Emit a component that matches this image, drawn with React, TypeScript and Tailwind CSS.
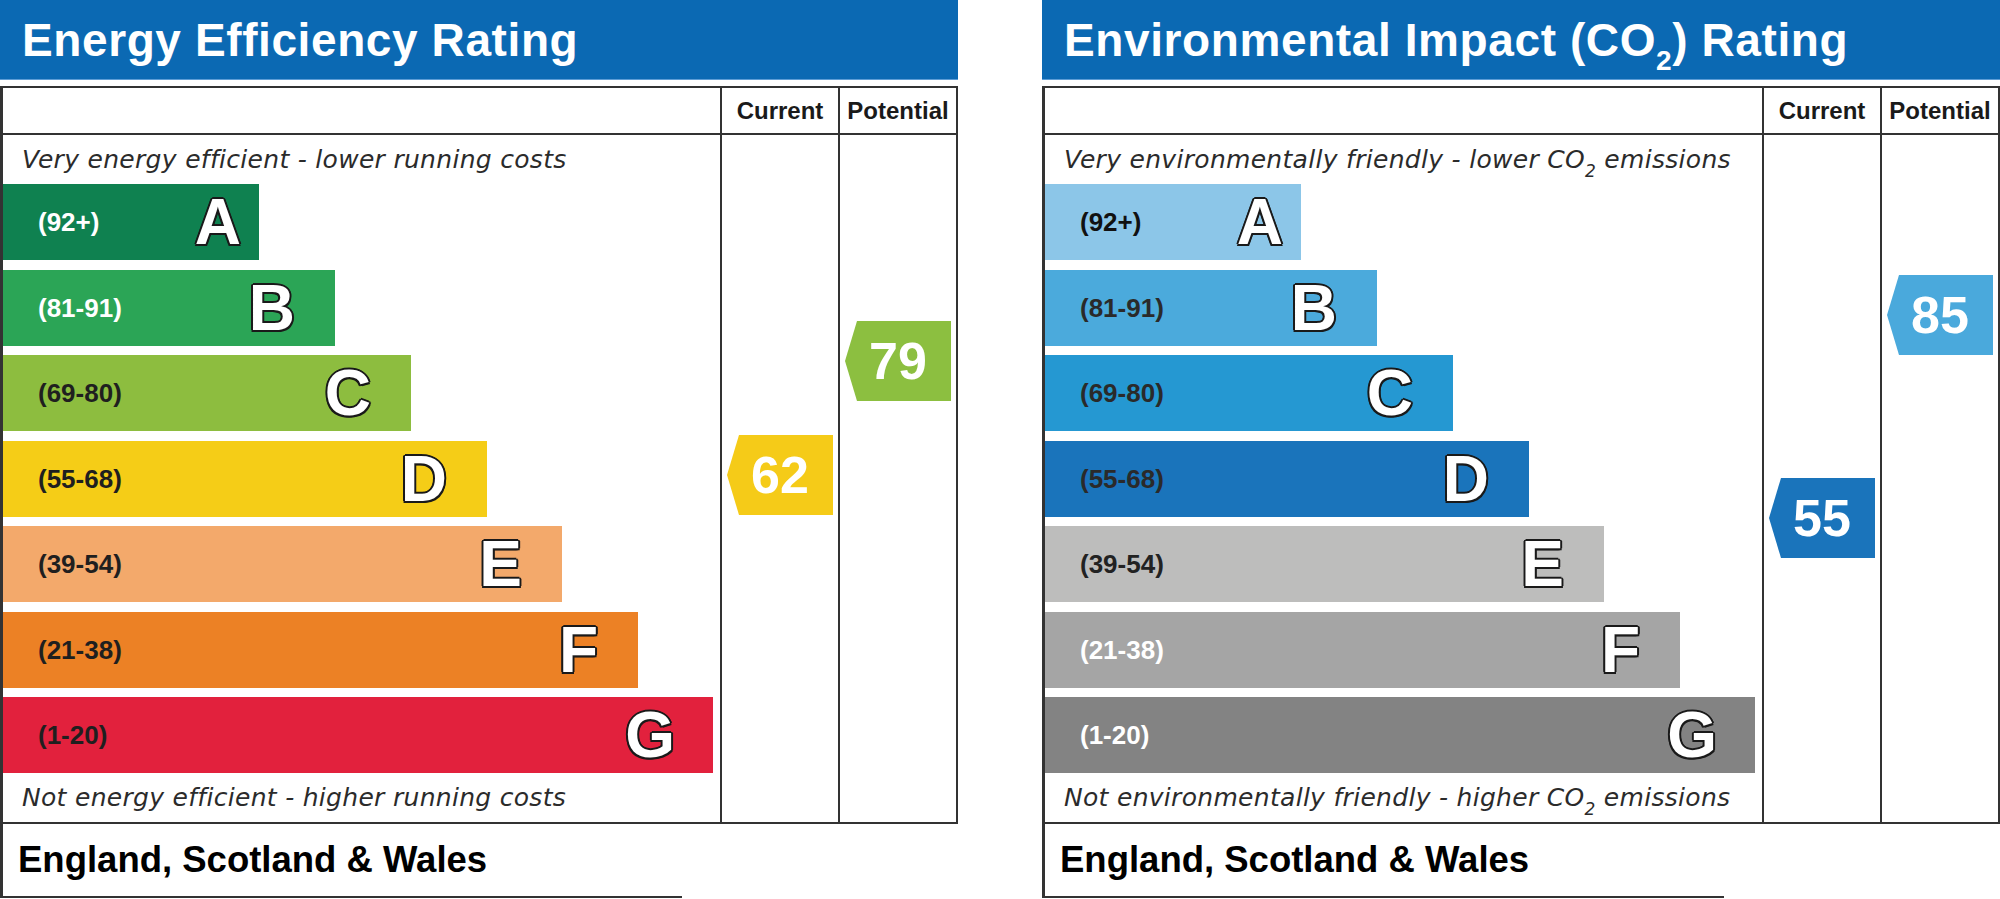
import React from "react";

type Band = {
  range: string;
  letter: string;
  width: string;
  bg: string;
  label: string;
  pr: string;
};

const energyBands: Band[] = [
  { range: "(92+)", letter: "A", width: "w-[256px]", bg: "bg-[#0f8150]", label: "text-white", pr: "pr-[18px]" },
  { range: "(81-91)", letter: "B", width: "w-[332px]", bg: "bg-[#2ba556]", label: "text-white", pr: "pr-[40px]" },
  { range: "(69-80)", letter: "C", width: "w-[408px]", bg: "bg-[#8dbd3f]", label: "text-[#1f1f1f]", pr: "pr-[40px]" },
  { range: "(55-68)", letter: "D", width: "w-[484px]", bg: "bg-[#f5cd17]", label: "text-[#1f1f1f]", pr: "pr-[40px]" },
  { range: "(39-54)", letter: "E", width: "w-[559px]", bg: "bg-[#f3a96b]", label: "text-[#1f1f1f]", pr: "pr-[40px]" },
  { range: "(21-38)", letter: "F", width: "w-[635px]", bg: "bg-[#ec8125]", label: "text-[#1f1f1f]", pr: "pr-[40px]" },
  { range: "(1-20)", letter: "G", width: "w-[710px]", bg: "bg-[#e2213d]", label: "text-[#1f1f1f]", pr: "pr-[38px]" },
];

const co2Bands: Band[] = [
  { range: "(92+)", letter: "A", width: "w-[256px]", bg: "bg-[#8cc6e8]", label: "text-[#111111]", pr: "pr-[18px]" },
  { range: "(81-91)", letter: "B", width: "w-[332px]", bg: "bg-[#4baadc]", label: "text-[#2a2a2a]", pr: "pr-[40px]" },
  { range: "(69-80)", letter: "C", width: "w-[408px]", bg: "bg-[#2598d2]", label: "text-[#2a2a2a]", pr: "pr-[40px]" },
  { range: "(55-68)", letter: "D", width: "w-[484px]", bg: "bg-[#1a74bb]", label: "text-[#2a2a2a]", pr: "pr-[40px]" },
  { range: "(39-54)", letter: "E", width: "w-[559px]", bg: "bg-[#bdbdbc]", label: "text-[#222222]", pr: "pr-[40px]" },
  { range: "(21-38)", letter: "F", width: "w-[635px]", bg: "bg-[#a5a5a5]", label: "text-white", pr: "pr-[40px]" },
  { range: "(1-20)", letter: "G", width: "w-[710px]", bg: "bg-[#838383]", label: "text-white", pr: "pr-[38px]" },
];

const outline =
  "[text-shadow:-1.5px_-1.5px_0_#1a1a1a,1.5px_-1.5px_0_#1a1a1a,-1.5px_1.5px_0_#1a1a1a,1.5px_1.5px_0_#1a1a1a,0_2px_0_#1a1a1a,0_-2px_0_#1a1a1a,2px_0_0_#1a1a1a,-2px_0_0_#1a1a1a]";

function Arrow({ value, bg, mt }: { value: string; bg: string; mt: string }) {
  return (
    <div
      className={`${mt} ml-[5px] w-[106px] h-[80px] ${bg} flex items-center justify-center [clip-path:polygon(12px_0,100%_0,100%_100%,12px_100%,0_50%)]`}
    >
      <span className="text-white font-bold text-[52px] leading-none font-['Liberation_Sans',Arial,sans-serif]">
        {value}
      </span>
    </div>
  );
}

function Panel({
  title,
  topText,
  bottomText,
  bands,
  current,
  potential,
}: {
  title: React.ReactNode;
  topText: React.ReactNode;
  bottomText: React.ReactNode;
  bands: Band[];
  current: React.ReactNode;
  potential: React.ReactNode;
}) {
  return (
    <div className="w-[958px] flex flex-col">
      <div className="h-[80px] bg-[#0b69b3] border-b border-[#5d9dd6] flex items-center pl-[22px]">
        <span className="text-white font-bold text-[46px] tracking-[0.6px] leading-none font-['Liberation_Sans',Arial,sans-serif]">
          {title}
        </span>
      </div>
      <div className="h-[6px]" />
      <div className="flex border-t-2 border-r-2 border-b-2 border-l-[3px] border-[#333333]">
        <div className="flex-1 flex flex-col">
          <div className="h-[47px] border-b-2 border-[#333333]" />
          <div className="h-[49px] flex items-center pl-[19px]">
            <span className="text-[#2b2b2b] italic text-[25px] tracking-[0.3px] leading-none font-['DejaVu_Sans',Verdana,sans-serif]">
              {topText}
            </span>
          </div>
          <div className="flex flex-col gap-[9.5px]">
            {bands.map((b) => (
              <div
                key={b.letter}
                className={`${b.width} ${b.bg} h-[76px] flex items-center justify-between pl-[35px] ${b.pr}`}
              >
                <span
                  className={`${b.label} font-bold text-[26px] leading-none font-['Liberation_Sans',Arial,sans-serif]`}
                >
                  {b.range}
                </span>
                <span
                  className={`text-white font-bold text-[64px] leading-none font-['Liberation_Sans',Arial,sans-serif] ${outline}`}
                >
                  {b.letter}
                </span>
              </div>
            ))}
          </div>
          <div className="h-[49px] flex items-center pl-[19px]">
            <span className="text-[#2b2b2b] italic text-[25px] tracking-[0.3px] leading-none font-['DejaVu_Sans',Verdana,sans-serif]">
              {bottomText}
            </span>
          </div>
        </div>
        <div className="w-[118px] border-l-2 border-[#333333] flex flex-col">
          <div className="h-[47px] border-b-2 border-[#333333] flex items-center justify-center text-[#1a1a1a] font-bold text-[24px] font-['Liberation_Sans',Arial,sans-serif]">
            Current
          </div>
          {current}
        </div>
        <div className="w-[118px] border-l-2 border-[#333333] flex flex-col">
          <div className="h-[47px] border-b-2 border-[#333333] flex items-center justify-center text-[#1a1a1a] font-bold text-[24px] font-['Liberation_Sans',Arial,sans-serif]">
            Potential
          </div>
          {potential}
        </div>
      </div>
      <div className="w-[682px] h-[74px] border-l-[3px] border-b-2 border-[#333333] flex items-center pl-[15px]">
        <span className="text-black font-bold text-[36.5px] leading-none font-['Liberation_Sans',Arial,sans-serif]">
          England, Scotland &amp; Wales
        </span>
      </div>
    </div>
  );
}

export default function App() {
  return (
    <div className="w-[2000px] h-[899px] bg-white flex justify-between overflow-hidden">
      <Panel
        title="Energy Efficiency Rating"
        topText="Very energy efficient - lower running costs"
        bottomText="Not energy efficient - higher running costs"
        bands={energyBands}
        current={<Arrow value="62" bg="bg-[#f5cb18]" mt="mt-[300px]" />}
        potential={<Arrow value="79" bg="bg-[#8cbf40]" mt="mt-[186px]" />}
      />
      <Panel
        title={
          <>
            Environmental Impact (CO<sub className="text-[28px] align-[-7px]">2</sub>) Rating
          </>
        }
        topText={
          <>
            Very environmentally friendly - lower CO<sub className="text-[17px] align-[-5px]">2</sub>
            {" "}emissions
          </>
        }
        bottomText={
          <>
            Not environmentally friendly - higher CO<sub className="text-[17px] align-[-5px]">2</sub>
            {" "}emissions
          </>
        }
        bands={co2Bands}
        current={<Arrow value="55" bg="bg-[#1a74bb]" mt="mt-[343px]" />}
        potential={<Arrow value="85" bg="bg-[#4aa9dc]" mt="mt-[140px]" />}
      />
    </div>
  );
}
